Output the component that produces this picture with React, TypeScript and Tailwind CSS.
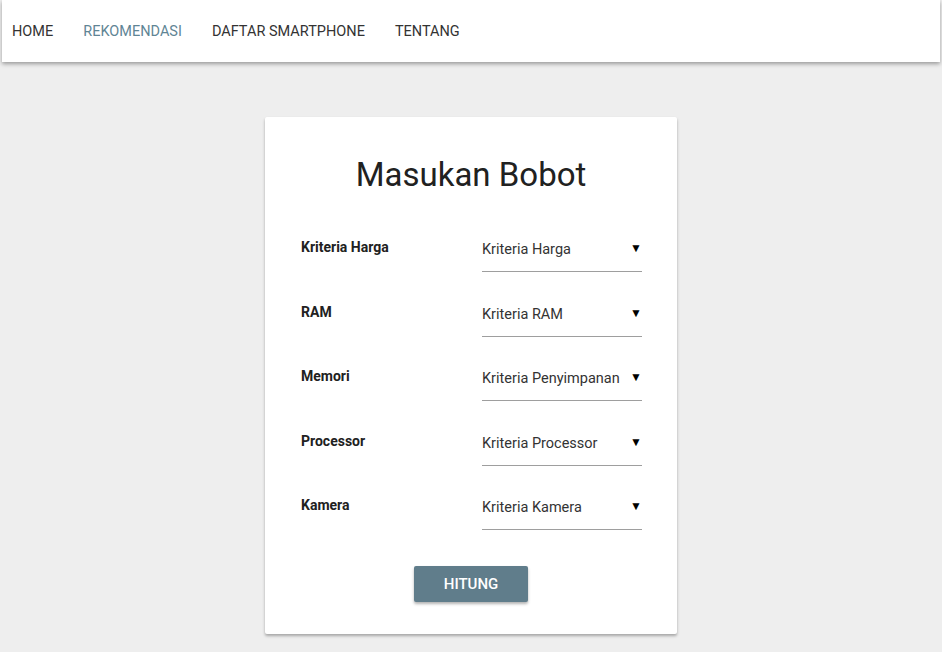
const navItems = [
  { label: "HOME", active: false },
  { label: "REKOMENDASI", active: true },
  { label: "DAFTAR SMARTPHONE", active: false },
  { label: "TENTANG", active: false },
];

const kriteria = [
  { label: "Kriteria Harga", value: "Kriteria Harga" },
  { label: "RAM", value: "Kriteria RAM" },
  { label: "Memori", value: "Kriteria Penyimpanan" },
  { label: "Processor", value: "Kriteria Processor" },
  { label: "Kamera", value: "Kriteria Kamera" },
];

export default function App() {
  return (
    <div className="min-h-[652px] bg-[#eeeeee] px-[2px] font-['Roboto',sans-serif]">
      {/* navbar */}
      <nav className="flex h-[62px] items-center bg-white pl-[10px] pt-[2px] shadow-[0_2px_4px_rgba(0,0,0,0.35)]">
        {navItems.map((item) => (
          <a
            key={item.label}
            className={
              "mr-[30px] text-[14.5px] leading-none " +
              (item.active ? "text-[#5f8595]" : "text-[#333333]")
            }
          >
            {item.label}
          </a>
        ))}
      </nav>

      {/* card */}
      <div className="flex justify-center pt-[55px] pb-[18px]">
        <div className="w-[412px] rounded-[2px] bg-white px-[35px] pt-[38px] pb-[32px] shadow-[0_2px_3px_rgba(0,0,0,0.3)]">
          <h1 className="text-center text-[33px] leading-[40px] text-[#212121]">Masukan Bobot</h1>

          <div className="mt-[41px] flex flex-col gap-[28.5px]">
            {kriteria.map((k) => (
              <div key={k.label} className="flex">
                <div className="w-[182px] pl-[1px] pt-[1px] text-[14px] font-bold text-[#212121]">{k.label}</div>
                <div className="flex h-[36px] w-[160px] items-start justify-between border-b border-[#9e9e9e] pt-[3px]">
                  <span className="text-[14.5px] text-[#333333]">{k.value}</span>
                  <span className="text-[12px] text-black">▼</span>
                </div>
              </div>
            ))}
          </div>

          <div className="mt-[36px] flex justify-center">
            <button className="h-[36px] w-[114px] rounded-[2px] bg-[#607d8b] text-[15px] font-medium text-white shadow-[0_2px_3px_rgba(0,0,0,0.3)]">
              HITUNG
            </button>
          </div>
        </div>
      </div>
    </div>
  );
}
